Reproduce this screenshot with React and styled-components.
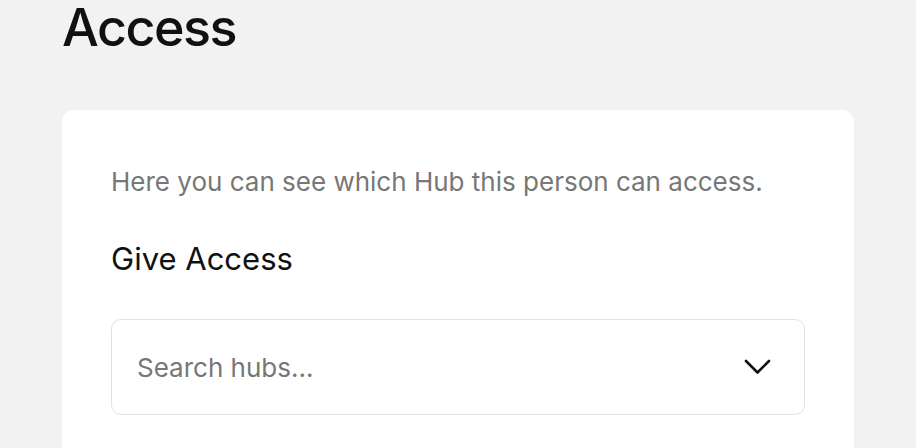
import React from "react";
import styled, { createGlobalStyle } from "styled-components";

const GlobalStyle = createGlobalStyle`
  html, body {
    margin: 0;
    padding: 0;
    background: #f2f2f2;
    font-family: Inter, "Open Sans", sans-serif;
  }
`;

const Page = styled.div`
  width: 916px;
  height: 448px;
  overflow: hidden;
  padding: 0 62px;
  box-sizing: border-box;
`;

const Title = styled.h1`
  margin: 0;
  font-size: 52px;
  font-weight: 500;
  line-height: 56px;
  color: #111;
  letter-spacing: -1.5px;
`;

const Card = styled.div`
  margin-top: 54px;
  background: #fff;
  border-radius: 12px;
  padding: 57px 49px 40px;
  height: 400px;
`;

const Description = styled.p`
  margin: 0;
  font-size: 26px;
  line-height: 30px;
  color: #777;
`;

const SectionTitle = styled.h2`
  margin: 44px 0 0;
  font-size: 31px;
  font-weight: 400;
  line-height: 36px;
  color: #111;
`;

const SearchBox = styled.div`
  margin-top: 42px;
  height: 96px;
  box-sizing: border-box;
  border: 1px solid #e1e1e1;
  border-radius: 10px;
  display: flex;
  align-items: center;
  justify-content: space-between;
  padding: 0 33px 0 25px;
`;

const SearchInput = styled.input`
  border: none;
  outline: none;
  padding: 0;
  font-family: inherit;
  font-size: 26px;
  color: #111;
  flex: 1;
  background: transparent;
  &::placeholder {
    color: #777;
  }
`;

const Chevron = () => (
  <svg width="27" height="16" viewBox="0 0 27 16" fill="none">
    <path d="M2 2l11.5 11.5L25 2" stroke="#111" strokeWidth="2.6" strokeLinecap="round" strokeLinejoin="round" />
  </svg>
);

export default function App() {
  return (
    <Page>
      <GlobalStyle />
      <Title>Access</Title>
      <Card>
        <Description>Here you can see which Hub this person can access.</Description>
        <SectionTitle>Give Access</SectionTitle>
        <SearchBox>
          <SearchInput placeholder="Search hubs..." />
          <Chevron />
        </SearchBox>
      </Card>
    </Page>
  );
}
